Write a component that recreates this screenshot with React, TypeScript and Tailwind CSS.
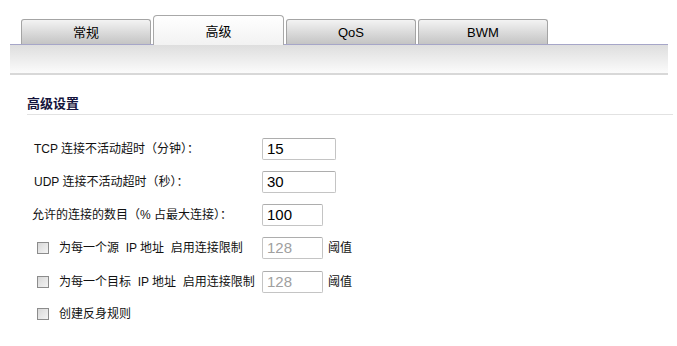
const tabs = ["常规", "高级", "QoS", "BWM"];

function Tab({ label, active }: { label: string; active: boolean }) {
  if (active) {
    return (
      <div className="relative z-10 -mb-px flex h-[30px] w-[131px] items-start justify-center rounded-t-[4px] border border-b-0 border-[#a8a8a8] bg-gradient-to-b from-white to-[#f2f2f2] pt-[6px] text-[13px] text-black">
        {label}
      </div>
    );
  }
  return (
    <div className="flex h-[25px] w-[130px] items-start justify-center rounded-t-[3px] border border-b-0 border-[#a4a4a4] bg-gradient-to-b from-[#f3f3f3] to-[#c4c4c4] pt-[3px] text-[13px] text-black">
      {label}
    </div>
  );
}

function TextBox({ value, width, disabled }: { value: string; width: string; disabled?: boolean }) {
  return (
    <div
      className={`flex h-[22px] items-center rounded-[2px] border border-[#c4c4c4] border-t-[#adadad] bg-white pl-[4px] font-['Liberation_Sans',Arial,sans-serif] text-[15px] ${width} ${
        disabled ? "text-[#a0a0a0]" : "text-black"
      }`}
    >
      {value}
    </div>
  );
}

function Check() {
  return (
    <div className="h-[12px] w-[12px] border border-[#8c8c8c] bg-gradient-to-br from-[#d8d8d8] to-[#f4f4f4]" />
  );
}

export default function App() {
  return (
    <div className="h-[346px] w-[677px] bg-white pt-[15px] font-['Liberation_Sans','Noto_Sans_CJK_SC',sans-serif] text-[12px] text-[#111]">
      {/* Tabs */}
      <div className="ml-[21px] flex items-end gap-[2px]">
        {tabs.map((t) => (
          <Tab key={t} label={t} active={t === "高级"} />
        ))}
      </div>
      <div className="ml-[10px] h-[31px] w-[658px] border-t border-b-2 border-t-[#a6a6c8] border-b-[#d8d8d8] bg-gradient-to-b from-[#dedede] to-[#fbfbfb]" />

      {/* Section */}
      <div className="mt-[21px] ml-[27px] w-[646px] border-b border-[#e2e2e2] pb-[2px] text-[13px] font-bold leading-[16px] text-[#14143c]">
        高级设置
      </div>

      <div className="flex flex-col">
        <div className="mt-[23px] flex h-[22px] items-center">
          <span className="ml-[34px] w-[228px]">TCP 连接不活动超时（分钟）：</span>
          <TextBox value="15" width="w-[74px]" />
        </div>
        <div className="mt-[11px] flex h-[22px] items-center">
          <span className="ml-[34px] w-[228px]">UDP 连接不活动超时（秒）：</span>
          <TextBox value="30" width="w-[74px]" />
        </div>
        <div className="mt-[11px] flex h-[22px] items-center">
          <span className="ml-[32px] w-[230px]">允许的连接的数目（% 占最大连接）：</span>
          <TextBox value="100" width="w-[61px]" />
        </div>
        <div className="mt-[11px] flex h-[22px] items-center">
          <div className="ml-[37px]">
            <Check />
          </div>
          <span className="ml-[10px] w-[203px] whitespace-pre">为每一个源  IP 地址  启用连接限制</span>
          <TextBox value="128" width="w-[61px]" disabled />
          <span className="ml-[5px]">阈值</span>
        </div>
        <div className="mt-[12px] flex h-[22px] items-center">
          <div className="ml-[37px]">
            <Check />
          </div>
          <span className="ml-[10px] w-[203px] whitespace-pre">为每一个目标  IP 地址  启用连接限制</span>
          <TextBox value="128" width="w-[61px]" disabled />
          <span className="ml-[5px]">阈值</span>
        </div>
        <div className="mt-[10px] flex h-[22px] items-center">
          <div className="ml-[37px]">
            <Check />
          </div>
          <span className="ml-[10px]">创建反身规则</span>
        </div>
      </div>
    </div>
  );
}
